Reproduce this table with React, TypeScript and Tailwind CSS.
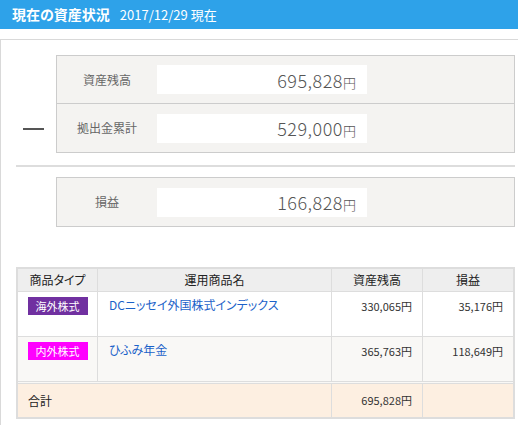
import React from "react";

const font = { fontFamily: '"Noto Sans CJK JP", "Noto Sans", sans-serif' } as const;

function Yen({ v, size = "big" }: { v: string; size?: "big" | "small" }) {
  if (size === "big") {
    return (
      <span className="text-[#555] leading-none">
        <span className="text-[18px] font-light tracking-[0.5px]">{v}</span>
        <span className="text-[13px] font-light">円</span>
      </span>
    );
  }
  return (
    <span className="text-[11px] text-[#333]">
      {v}
      <span>円</span>
    </span>
  );
}

function SumRow({ label, value, last }: { label: string; value: string; last?: boolean }) {
  return (
    <div className={`flex h-[48px] items-center ${last ? "" : "border-b border-[#cccccc]"}`}>
      <div className="w-[100px] text-center text-[12px] text-[#666]">{label}</div>
      <div className="flex h-[29px] w-[210px] items-center justify-end bg-white pr-[11px]">
        <Yen v={value} />
      </div>
    </div>
  );
}

function Badge({ text, color }: { text: string; color: string }) {
  return (
    <div
      className="mx-auto flex h-[18px] w-[60px] items-center justify-center text-[11px] text-white"
      style={{ backgroundColor: color }}
    >
      {text}
    </div>
  );
}

export default function App() {
  return (
    <div className="h-[425px] w-[518px] overflow-hidden bg-white [font-feature-settings:'palt']" style={font}>
      <div className="flex h-[29px] items-center bg-[#2ea2e9] pl-[12px] text-white">
        <span className="text-[14px] font-bold">現在の資産状況</span>
        <span className="ml-[10px] text-[13px]">2017/12/29 現在</span>
      </div>
      <div className="mt-[10px] h-[400px] border-l border-t border-[#d9d9d9] pl-[15px] pr-[3px] pt-[15px]">
        <div className="flex">
          <div className="flex w-[40px] items-end pb-[23px]">
            <div className="ml-[7px] h-[2px] w-[21px] bg-[#555]" />
          </div>
          <div className="w-[459px] border border-[#cccccc] bg-[#f4f3f1]">
            <SumRow label="資産残高" value="695,828" />
            <SumRow label="拠出金累計" value="529,000" last />
          </div>
        </div>
        <div className="mt-[12px] h-[2px] bg-[#dddddd]" />
        <div className="mt-[10px] flex">
          <div className="w-[40px]" />
          <div className="w-[459px] border border-[#cccccc] bg-[#f4f3f1]">
            <SumRow label="損益" value="166,828" last />
          </div>
        </div>
        <div className="mt-[40px] w-[499px] border-2 border-[#dddddd] text-[12px]">
          <div className="grid h-[23px] grid-cols-[80px_234px_91px_90px] border-b border-[#dddddd] bg-[#eeeeee] text-[#222]">
            <div className="flex items-center justify-center border-r border-[#dddddd]">商品タイプ</div>
            <div className="flex items-center justify-center border-r border-[#dddddd]">運用商品名</div>
            <div className="flex items-center justify-center border-r border-[#dddddd]">資産残高</div>
            <div className="flex items-center justify-center">損益</div>
          </div>
          <div className="grid h-[45px] grid-cols-[80px_234px_91px_90px] border-b border-[#dddddd] bg-white">
            <div className="border-r border-[#dddddd] pt-[5px]">
              <Badge text="海外株式" color="#7030a0" />
            </div>
            <div className="border-r border-[#dddddd] pl-[11px] pt-[4px] text-[#1b62c9]">DCニッセイ外国株式インデックス</div>
            <div className="border-r border-[#dddddd] pr-[10px] pt-[5px] text-right">
              <Yen v="330,065" size="small" />
            </div>
            <div className="pr-[10px] pt-[5px] text-right">
              <Yen v="35,176" size="small" />
            </div>
          </div>
          <div className="grid h-[47px] grid-cols-[80px_234px_91px_90px] border-b-[3px] border-double border-[#dddddd] bg-[#f9f8f6]">
            <div className="border-r border-[#dddddd] pt-[5px]">
              <Badge text="内外株式" color="#ff00ff" />
            </div>
            <div className="border-r border-[#dddddd] pl-[11px] pt-[4px] text-[#1b62c9]">ひふみ年金</div>
            <div className="border-r border-[#dddddd] pr-[10px] pt-[5px] text-right">
              <Yen v="365,763" size="small" />
            </div>
            <div className="pr-[10px] pt-[5px] text-right">
              <Yen v="118,649" size="small" />
            </div>
          </div>
          <div className="grid h-[33px] grid-cols-[314px_91px_90px] bg-[#fdefe1]">
            <div className="flex items-center border-r border-[#dddddd] pl-[10px] text-[#222]">合計</div>
            <div className="flex items-center justify-end border-r border-[#dddddd] pr-[10px]">
              <Yen v="695,828" size="small" />
            </div>
            <div />
          </div>
        </div>
      </div>
    </div>
  );
}
